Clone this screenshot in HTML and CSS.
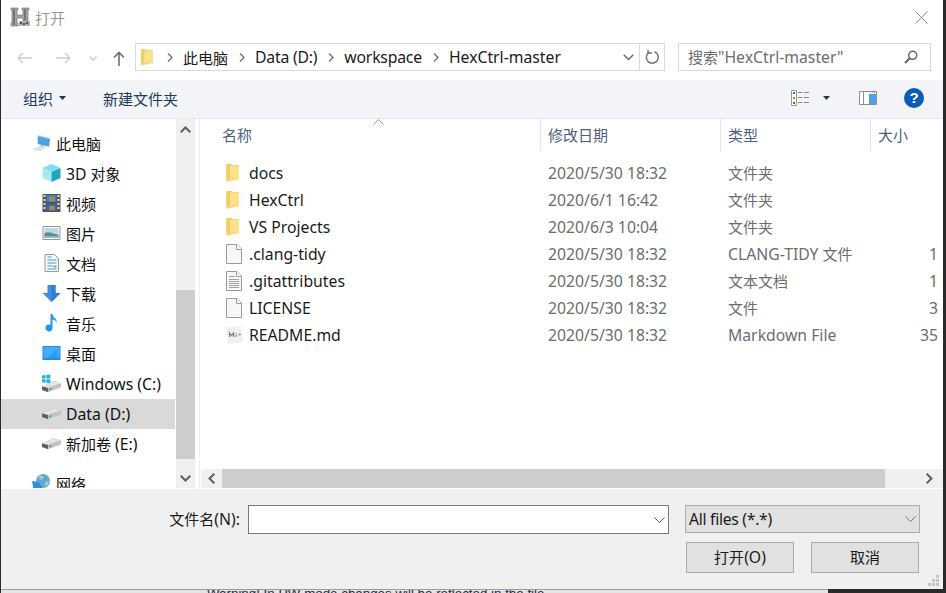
FILE: index.html
```html
<!DOCTYPE html>
<html lang="zh">
<head>
<meta charset="utf-8">
<title>打开</title>
<link rel="stylesheet" href="styles.css">
</head>
<body>
<svg class="defs" width="0" height="0">
  <symbol id="folder" viewBox="0 0 13 18">
    <path d="M0 0h5l1 1h6.500v13.500H0z" fill="#f0c65c"/>
    <path d="M3 1.500h9.500V14.500H3z" fill="#fde28e"/>
    <path d="M0 0h3.500v14.500L0 18z" fill="#f5cb5e"/>
    <path d="M0 18l3.500-4H12.500v1z" fill="#f8d77e"/>
  </symbol>
  <symbol id="file" viewBox="0 0 16 20">
    <path d="M.5.500h10.500l4.500 4.500v14.500H.5z" fill="#f7f7f8" stroke="#9b9b9b"/>
    <path d="M10.500.500v5h5" fill="#fff" stroke="#9b9b9b"/>
  </symbol>
  <symbol id="textfile" viewBox="0 0 16 20">
    <path d="M.5.500h10.500l4.500 4.500v14.500H.5z" fill="#f7f7f8" stroke="#9b9b9b"/>
    <path d="M10.500.500v5h5" fill="#fff" stroke="#9b9b9b"/>
    <path d="M3 5.500h6M3 8.500h10M3 10.500h10M3 12.500h10M3 14.500h10M3 16.500h10" stroke="#a2a2a2"/>
  </symbol>
  <symbol id="mdfile" viewBox="0 0 17 18">
    <path d="M0 1l15-1 2 16-14 2z" fill="#f0f0f0"/>
    <path d="M3.500 11V7l2 2.500L7.500 7v4" fill="none" stroke="#7f7f7f" stroke-width="1.200"/>
    <path d="M10 6.500v4M8.800 9.500l1.200 1.300 1.200-1.300M12.500 8.500h2.500M13.700 7.300v2.400" fill="none" stroke="#9a9a9a"/>
  </symbol>
  <symbol id="drive" viewBox="0 0 19 12">
    <path d="M0 6.500l12-5.500 7 2.500V7L6 12 0 10z" fill="#9b9b9b"/>
    <path d="M0 6.500l12-5.500 7 2.500-13 4.500z" fill="#e4e4e4"/>
    <path d="M0 6.500l6 1.500v4L0 10z" fill="#5f5f5f"/>
    <path d="M6 8l13-4.500V7L6 12z" fill="#c4c4c4"/>
    <path d="M7 9l2.500-.9v1.500L7 10.500z" fill="#34b34a"/>
  </symbol>
</svg>

<main class="dialog">
  <header class="title">
    <svg class="app-ico" width="21" height="21" viewBox="0 0 21 21">
      <path d="M1 1h7v2H7v5h6V3h-1V1h7v2h-1v11h-5v-3H7v5h1v3H1v-3h1V3H1z" fill="#a6a6a6" stroke="#6a6a6a" stroke-width=".6"/>
      <path d="M3 2h2v16H3zM14 2h2v11h-2z" fill="#767676"/>
      <path d="M9 14h11v5H9z" fill="#b0b0b0"/>
      <path d="M10 15h2v2h-2zM13 16h2v2h-2zM16 15h2v2h-2z" fill="#4f4f4f"/>
    </svg>
    <span class="zh title-text">打开</span>
    <svg class="close" width="13" height="13" viewBox="0 0 13 13"><path d="M.5.500l12 12M12.500.500l-12 12" stroke="#8c8c8c" fill="none"/></svg>
  </header>

  <nav class="nav">
    <svg class="n-back" width="15" height="12" viewBox="0 0 15 12"><path d="M15 6H1M6 1L1 6l5 5" fill="none" stroke="#d0d0d0" stroke-width="1.500"/></svg>
    <svg class="n-fwd" width="15" height="12" viewBox="0 0 15 12"><path d="M0 6h14M9 1l5 5-5 5" fill="none" stroke="#d0d0d0" stroke-width="1.500"/></svg>
    <svg class="n-down" width="8" height="5" viewBox="0 0 8 5"><path d="M.5.500L4 4 7.500.500" fill="none" stroke="#cfcfcf" stroke-width="1.400"/></svg>
    <svg class="n-up" width="12" height="15" viewBox="0 0 12 15"><path d="M6 15V1.500M1 6.500l5-5 5 5" fill="none" stroke="#6f6f6f" stroke-width="1.600"/></svg>
    <div class="address">
      <svg class="addr-folder" width="12" height="17"><use href="#folder"/></svg>
      <svg class="crumb-sep" width="6" height="9" viewBox="0 0 6 9"><path d="M1 .500l4 4-4 4" fill="none" stroke="#6e6e6e" stroke-width="1.300"/></svg>
      <span class="crumb zh">此电脑</span>
      <svg class="crumb-sep" width="6" height="9" viewBox="0 0 6 9"><path d="M1 .500l4 4-4 4" fill="none" stroke="#6e6e6e" stroke-width="1.300"/></svg>
      <span class="crumb tight">Data (D:)</span>
      <svg class="crumb-sep" width="6" height="9" viewBox="0 0 6 9"><path d="M1 .500l4 4-4 4" fill="none" stroke="#6e6e6e" stroke-width="1.300"/></svg>
      <span class="crumb tight">workspace</span>
      <svg class="crumb-sep" width="6" height="9" viewBox="0 0 6 9"><path d="M1 .500l4 4-4 4" fill="none" stroke="#6e6e6e" stroke-width="1.300"/></svg>
      <span class="crumb">HexCtrl-master</span>
      <svg class="addr-chev" width="11" height="7" viewBox="0 0 11 7"><path d="M.7.700l4.800 4.800L10.300.700" fill="none" stroke="#6e6e6e" stroke-width="1.500"/></svg>
      <span class="addr-refresh">
        <svg width="15" height="16" viewBox="0 0 15 16"><path d="M9.500 2.700a6 6 0 1 1-5 .3" fill="none" stroke="#757575" stroke-width="1.500"/><path d="M3 .500v3.500h4" fill="none" stroke="#757575" stroke-width="1.300"/></svg>
      </span>
    </div>
    <div class="search">
      <span class="search-text"><span class="zh">搜索</span>"HexCtrl-master"</span>
      <svg width="14" height="14" viewBox="0 0 14 14"><circle cx="8.700" cy="5.300" r="4" fill="none" stroke="#6a6a6a" stroke-width="1.600"/><path d="M5.800 8.200L1 13" stroke="#6a6a6a" stroke-width="2.200"/></svg>
    </div>
  </nav>

  <div class="cmd">
    <span class="zh cmd-item">组织</span>
    <svg class="caret c-org" width="7" height="4" viewBox="0 0 7 4"><path d="M0 0h7L3.500 4z" fill="#1d3557"/></svg>
    <span class="zh cmd-item c-new">新建文件夹</span>
    <span class="cmd-right">
      <svg width="19" height="16" viewBox="0 0 19 16">
        <path d="M.5.500h5v15h-5z" fill="#fff" stroke="#9a9a9a"/>
        <path d="M2 2h2v2H2z" fill="#3a78b8"/><path d="M2 7h2v2H2z" fill="#9a9a30"/><path d="M2 12h2v2H2z" fill="#b8452c"/>
        <path d="M7 2.500h4.500M13 2.500h5M7 7.500h4.500M13 7.500h5M7 12.500h4.500M13 12.500h5" stroke="#8a8a8a"/>
      </svg>
      <svg class="c-view" width="7" height="4" viewBox="0 0 7 4"><path d="M0 0h7L3.500 4z" fill="#1d3557"/></svg>
      <svg class="c-pane" width="18" height="14" viewBox="0 0 18 14">
        <path d="M.5.500h17v13H.5z" fill="#fff" stroke="#8f8f8f"/>
        <path d="M4.500 1v12" stroke="#8f8f8f"/>
        <path d="M10 3h7v10h-7z" fill="#4ea1e6"/>
        <path d="M11 1h1v1h-1zM13 1h1v1h-1zM15 1h1v1h-1z" fill="#b0b0b0"/>
      </svg>
      <span class="help">?</span>
    </span>
  </div>

  <section class="main">
    <aside class="side">
      <div class="tree">
        <div class="tree-row root">
          <svg width="20" height="18" viewBox="0 0 20 18"><path d="M0 16l8-4 7 2-7 4z" fill="#dfe3e6"/><path d="M6 1l13 3-1 9-12-3z" fill="#4aa3e0"/><path d="M6 1l13 3v1L6 2z" fill="#9fd4f4"/><path d="M9 10.500l4 1v2l-4-1z" fill="#b8c4cc"/></svg>
          <span class="zh">此电脑</span>
        </div>
        <div class="tree-row">
          <svg width="18" height="18" viewBox="0 0 18 18"><path d="M9 0l9 4-9 4-9-4z" fill="#7ee0ee"/><path d="M0 4l9 4v10l-9-4z" fill="#a9eaf0"/><path d="M18 4L9 8v10l9-4z" fill="#22a3c4"/></svg>
          <span class="mixed">3D <span class="zh">对象</span></span>
        </div>
        <div class="tree-row">
          <svg width="18" height="18" viewBox="0 0 18 18"><path d="M0 0h18v18H0z" fill="#555"/><path d="M1 1h2v2H1zM1 5h2v2H1zM1 9h2v2H1zM1 13h2v2H1zM15 1h2v2h-2zM15 5h2v2h-2zM15 9h2v2h-2zM15 13h2v2h-2z" fill="#ddd"/><path d="M4 1h10v7H4z" fill="#3f7fd0"/><path d="M4 10h10v7H4z" fill="#2f68c4"/><path d="M7 3h5v4H7zM7 12h5v4H7z" fill="#d58a2a"/><path d="M9 4h2v2H9zM9 13h2v2H9z" fill="#5a9e2f"/></svg>
          <span class="zh">视频</span>
        </div>
        <div class="tree-row">
          <svg width="18" height="14" viewBox="0 0 18 14"><path d="M.5.500h17v13H.5z" fill="#fff" stroke="#8f959b"/><path d="M2 2h14v10H2z" fill="#bcd6ea"/><path d="M2 7c4-2 8 0 14 2v3H2z" fill="#5f8f80"/><path d="M2 10h14v2H2z" fill="#8fb6cf"/></svg>
          <span class="zh">图片</span>
        </div>
        <div class="tree-row">
          <svg width="18" height="18" viewBox="0 0 18 18"><path d="M2.500.500h9.500l4 4v13H2.500z" fill="#f7f7f7" stroke="#9a9a9a"/><path d="M5 3h4M5 6h9M5 9h9M5 12h5M5 15h9" stroke="#3f9bdc" stroke-width="1.200"/><path d="M11 11.500h3v2h-3z" fill="#6aa"/></svg>
          <span class="zh">文档</span>
        </div>
        <div class="tree-row">
          <svg width="18" height="17" viewBox="0 0 18 17"><path d="M5 0h8v8h5l-9 9-9-9h5z" fill="#3f8fdc"/><path d="M9 0h4v8h5l-9 9z" fill="#2f7fd0"/></svg>
          <span class="zh">下载</span>
        </div>
        <div class="tree-row">
          <svg width="18" height="18" viewBox="0 0 18 18"><path d="M8 0h2c0 4 5 4 4 9-1-3-2-3-4-3.500V14a3.500 3.500 0 1 1-2-3.200z" fill="#1e9be8"/></svg>
          <span class="zh">音乐</span>
        </div>
        <div class="tree-row">
          <svg width="18" height="14" viewBox="0 0 18 14"><path d="M0 0h18v14H0z" fill="#1d8fe8"/><path d="M1 1h16v11H1z" fill="#45adf5"/><path d="M4 12L15 3v9z" fill="#2c9bef"/></svg>
          <span class="zh">桌面</span>
        </div>
        <div class="tree-row">
          <svg width="19" height="18" viewBox="0 0 19 18"><path d="M0 1.500l3.500-.5v3.500H0zM4.300 1l4-.6v4.100h-4zM0 5.300h3.500v3.500L0 8.300zM4.300 5.300h4v4.100l-4-.6z" fill="#1fb0ea"/><use href="#drive" x="0" y="6" width="19" height="12"/></svg>
          <span class="mixed">Windows (C:)</span>
        </div>
        <div class="tree-row selected">
          <svg width="19" height="12"><use href="#drive"/></svg>
          <span class="mixed">Data (D:)</span>
        </div>
        <div class="tree-row">
          <svg width="19" height="12"><use href="#drive"/></svg>
          <span class="mixed"><span class="zh">新加卷</span> (E:)</span>
        </div>
        <div class="tree-row root net">
          <svg width="19" height="18" viewBox="0 0 19 18"><circle cx="11" cy="7" r="7" fill="#5da8dc"/><path d="M7 2c2-1 4 0 5 1l-2 3-3-1zM13 8l4-1-1 4-3 1z" fill="#9fd0a8"/><path d="M0 7l6 1 4 4v6H2z" fill="#2e8ed8"/></svg>
          <span class="zh">网络</span>
        </div>
      </div>
      <div class="vscroll">
        <span class="sb-btn"><svg width="11" height="7" viewBox="0 0 11 7"><path d="M.7 6.300l4.800-4.800 4.800 4.800" fill="none" stroke="#606060" stroke-width="2"/></svg></span>
        <span class="v-track"></span>
        <span class="v-thumb"></span>
        <span class="sb-btn down"><svg width="11" height="7" viewBox="0 0 11 7"><path d="M.7.700l4.800 4.800 4.800-4.800" fill="none" stroke="#606060" stroke-width="2"/></svg></span>
      </div>
    </aside>

    <div class="files">
      <div class="list-head">
        <span class="h-name zh">名称</span>
        <span class="h-col zh">修改日期</span>
        <span class="h-col zh">类型</span>
        <span class="h-col zh">大小</span>
        <svg class="sort" width="11" height="6" viewBox="0 0 11 6"><path d="M.5 5.500l5-5 5 5" fill="none" stroke="#9a9a9a"/></svg>
      </div>
      <div class="rows">
        <div class="row"><svg width="14" height="18"><use href="#folder"/></svg><span>docs</span><span class="meta">2020/5/30 18:32</span><span class="meta zh">文件夹</span><span class="meta size"></span></div>
        <div class="row"><svg width="14" height="18"><use href="#folder"/></svg><span>HexCtrl</span><span class="meta">2020/6/1 16:42</span><span class="meta zh">文件夹</span><span class="meta size"></span></div>
        <div class="row"><svg width="14" height="18"><use href="#folder"/></svg><span>VS Projects</span><span class="meta">2020/6/3 10:04</span><span class="meta zh">文件夹</span><span class="meta size"></span></div>
        <div class="row"><svg width="16" height="20"><use href="#file"/></svg><span>.clang-tidy</span><span class="meta">2020/5/30 18:32</span><span class="meta">CLANG-TIDY <span class="zh">文件</span></span><span class="meta size">1</span></div>
        <div class="row"><svg width="16" height="20"><use href="#textfile"/></svg><span>.gitattributes</span><span class="meta">2020/5/30 18:32</span><span class="meta zh">文本文档</span><span class="meta size">1</span></div>
        <div class="row"><svg width="16" height="20"><use href="#file"/></svg><span>LICENSE</span><span class="meta">2020/5/30 18:32</span><span class="meta zh">文件</span><span class="meta size">3</span></div>
        <div class="row"><svg width="17" height="18"><use href="#mdfile"/></svg><span>README.md</span><span class="meta">2020/5/30 18:32</span><span class="meta">Markdown File</span><span class="meta size">35</span></div>
      </div>
      <div class="hscroll">
        <span class="hs-btn"><svg width="7" height="11" viewBox="0 0 7 11"><path d="M6.300.700L1.500 5.500l4.800 4.800" fill="none" stroke="#606060" stroke-width="2"/></svg></span>
        <span class="h-thumb"></span>
        <span class="hs-btn end"><svg width="7" height="11" viewBox="0 0 7 11"><path d="M.7.700l4.800 4.800-4.800 4.800" fill="none" stroke="#606060" stroke-width="2"/></svg></span>
      </div>
    </div>
  </section>

  <footer class="foot">
    <div class="foot-row">
      <label class="foot-label"><span class="zh">文件名</span>(N):</label>
      <div class="file-input"><svg width="11" height="6" viewBox="0 0 11 6"><path d="M.5.500l5 5 5-5" fill="none" stroke="#606060"/></svg></div>
      <div class="file-type"><span class="type-text">All files (*.*)</span><svg width="11" height="6" viewBox="0 0 11 6"><path d="M.5.500l5 5 5-5" fill="none" stroke="#777"/></svg></div>
    </div>
    <div class="foot-btns">
      <button class="btn"><span class="zh">打开</span>(O)</button>
      <button class="btn"><span class="zh">取消</span></button>
    </div>
    <svg class="grip" width="12" height="12" viewBox="0 0 12 12"><path d="M8 0h3v3H8zM4 4h3v3H4zM8 4h3v3H8zM0 8h3v3H0zM4 8h3v3H4zM8 8h3v3H8z" fill="#c4c4c4"/></svg>
  </footer>
</main>

<div class="behind"><p class="warn">Warning! In RW mode changes will be reflected in the file</p></div>
</body>
</html>
```

FILE: styles.css
```css
html, body { margin: 0; padding: 0; }
body {
  width: 946px;
  height: 593px;
  overflow: hidden;
  background: #2a2a2a;
  font-family: "Noto Sans", "Noto Sans CJK SC", sans-serif;
  font-size: 15.75px;
  color: #1a1a1a;
}
.defs { position: absolute; }
svg { display: block; flex: none; overflow: hidden; }
.zh { font-family: "Noto Sans CJK SC", sans-serif; font-size: 15px; }

.dialog {
  margin-left: 1px;
  width: 942px;
  height: 589px;
  background: #fff;
  position: relative;
  display: flex;
  flex-direction: column;
}

.title { height: 37px; display: flex; align-items: center; padding: 0 15px 3px 9px; box-sizing: border-box; }
.title-text { color: #9a9a9a; margin-left: 4px; }
.close { margin-left: auto; }

.nav { height: 43px; display: flex; align-items: center; padding: 0 12px 3px 16px; box-sizing: border-box; }
.n-back, .n-fwd, .n-down, .n-up { margin-top: 2px; }
.n-fwd { margin-left: 24px; }
.n-down { margin-left: 18px; }
.n-up { margin-left: 16px; }
.address {
  margin-left: 10px;
  width: 530px;
  height: 28px;
  box-sizing: border-box;
  border: 1px solid #d9d9d9;
  display: flex;
  align-items: center;
  padding-left: 5px;
  color: #1a1a1a;
}
.tight { letter-spacing: -.2px; }
.crumb-sep { margin: 0 10px 0 11px; }
.addr-folder + .crumb-sep { margin: 0 10px 0 14px; }
.addr-chev { margin-left: auto; margin-right: 5px; }
.addr-refresh { width: 24px; height: 26px; border-left: 1px solid #d9d9d9; display: flex; align-items: center; justify-content: center; }
.search {
  margin-left: 13px;
  width: 253px;
  height: 28px;
  box-sizing: border-box;
  border: 1px solid #d9d9d9;
  display: flex;
  align-items: center;
  justify-content: space-between;
  padding: 0 12px 0 9px;
  color: #6d6d6d;
}

.cmd {
  height: 39px;
  background: #f3f4f7;
  border-bottom: 1px solid #e6e6e6;
  box-sizing: border-box;
  display: flex;
  align-items: center;
  padding: 0 19px 2px 22px;
}
.cmd-item { color: #1e3a5f; }
.c-org { margin-left: 6px; }
.c-new { margin-left: 37px; }
.cmd-right { margin-left: auto; display: flex; align-items: center; }
.c-view { margin-left: 13px; }
.c-pane { margin-left: 29px; }
.help {
  margin-left: 27px;
  width: 20px;
  height: 20px;
  border-radius: 50%;
  background: #0a5cb8;
  color: #fff;
  font: bold 15px/20px "Liberation Sans", sans-serif;
  text-align: center;
}

.main { height: 370px; display: flex; }
.side { width: 198px; flex: none; display: flex; border-right: 1px solid #f0f0f0; }
.tree { width: 174px; flex: none; padding-top: 10px; box-sizing: border-box; height: 369px; overflow: hidden; }
.tree-row { height: 30px; box-sizing: border-box; display: flex; align-items: center; padding: 0 0 2px 41px; gap: 5px; color: #111; }
.tree-row svg { width: 19px; }
.tree-row .mixed { padding-top: 2px; }
.tree-row.root { padding-left: 31px; }
.tree-row.net { margin-top: 10px; }
.tree-row.selected { background: #d9d9d9; }
.vscroll { width: 19px; flex: none; margin-left: 1px; height: 369px; background: #f0f0f0; display: flex; flex-direction: column; }
.sb-btn { height: 20px; flex: none; display: flex; align-items: center; justify-content: center; }
.sb-btn.down { height: 29px; padding-top: 9px; box-sizing: border-box; }
.v-track { flex: 1; }
.v-thumb { height: 169px; flex: none; background: #cdcdcd; }

.files { flex: 1; min-width: 0; margin-left: 1px; display: flex; flex-direction: column; }
.list-head { height: 32px; display: grid; grid-template-columns: 339px 180px 150px 1fr; position: relative; flex: none; color: #4c607a; }
.list-head span { line-height: 32px; }
.h-name { padding-left: 21px; }
.h-col { padding-left: 7px; border-left: 1px solid #e5e5e5; height: 32px; }
.sort { position: absolute; left: 172px; top: 0; }
.rows { flex: 1; padding-top: 9px; }
.row {
  height: 27px;
  box-sizing: border-box;
  display: grid;
  grid-template-columns: 23px 299px 180px 160px 50px;
  align-items: center;
  padding: 0 0 2px 25px;
  color: #1a1a1a;
}
.meta { color: #6d6d6d; }
.size { text-align: right; }
.hscroll { height: 19px; flex: none; margin-bottom: 1px; background: #f0f0f0; display: flex; }
.hs-btn { width: 21px; flex: none; display: flex; align-items: center; justify-content: center; }
.hs-btn.end { margin-left: auto; justify-content: flex-end; padding-right: 10px; box-sizing: content-box; width: 18px; }
.h-thumb { width: 663px; background: #cdcdcd; flex: none; }

.foot { height: 100px; background: #f0f0f0; padding: 16px 0 0 168px; box-sizing: border-box; position: relative; flex: none; }
.foot-row { display: flex; align-items: flex-start; }
.foot-label { width: 71px; height: 29px; line-height: 28px; text-align: right; margin-right: 8px; white-space: nowrap; }
.file-input {
  width: 421px;
  height: 29px;
  box-sizing: border-box;
  background: #fff;
  border: 1px solid #7a7a7a;
  display: flex;
  align-items: center;
  justify-content: flex-end;
  padding-right: 3px;
}
.file-type {
  margin-left: 16px;
  width: 235px;
  height: 28px;
  box-sizing: border-box;
  background: #e1e1e1;
  border: 1px solid #adadad;
  display: flex;
  align-items: center;
  justify-content: space-between;
  padding: 0 3px 0 3px;
}
.type-text { letter-spacing: -.3px; }
.foot-btns { display: flex; justify-content: flex-end; gap: 17px; padding-right: 24px; margin-top: 8px; }
.btn {
  width: 108px;
  height: 31px;
  box-sizing: border-box;
  background: #e1e1e1;
  border: 1px solid #adadad;
  padding: 0 0 2px;
  font: inherit;
  color: #1a1a1a;
}
.grip { position: absolute; right: 3px; bottom: 2px; }

.behind { width: 827px; height: 4px; margin-left: 1px; background: #e4e4e4; border-top: 1px solid #9c9c9c; box-sizing: border-box; overflow: hidden; }
.warn { margin: -3px 0 0 206px; font: 13.35px/14px "Liberation Sans", sans-serif; color: #1c2a4a; white-space: nowrap; }
```
